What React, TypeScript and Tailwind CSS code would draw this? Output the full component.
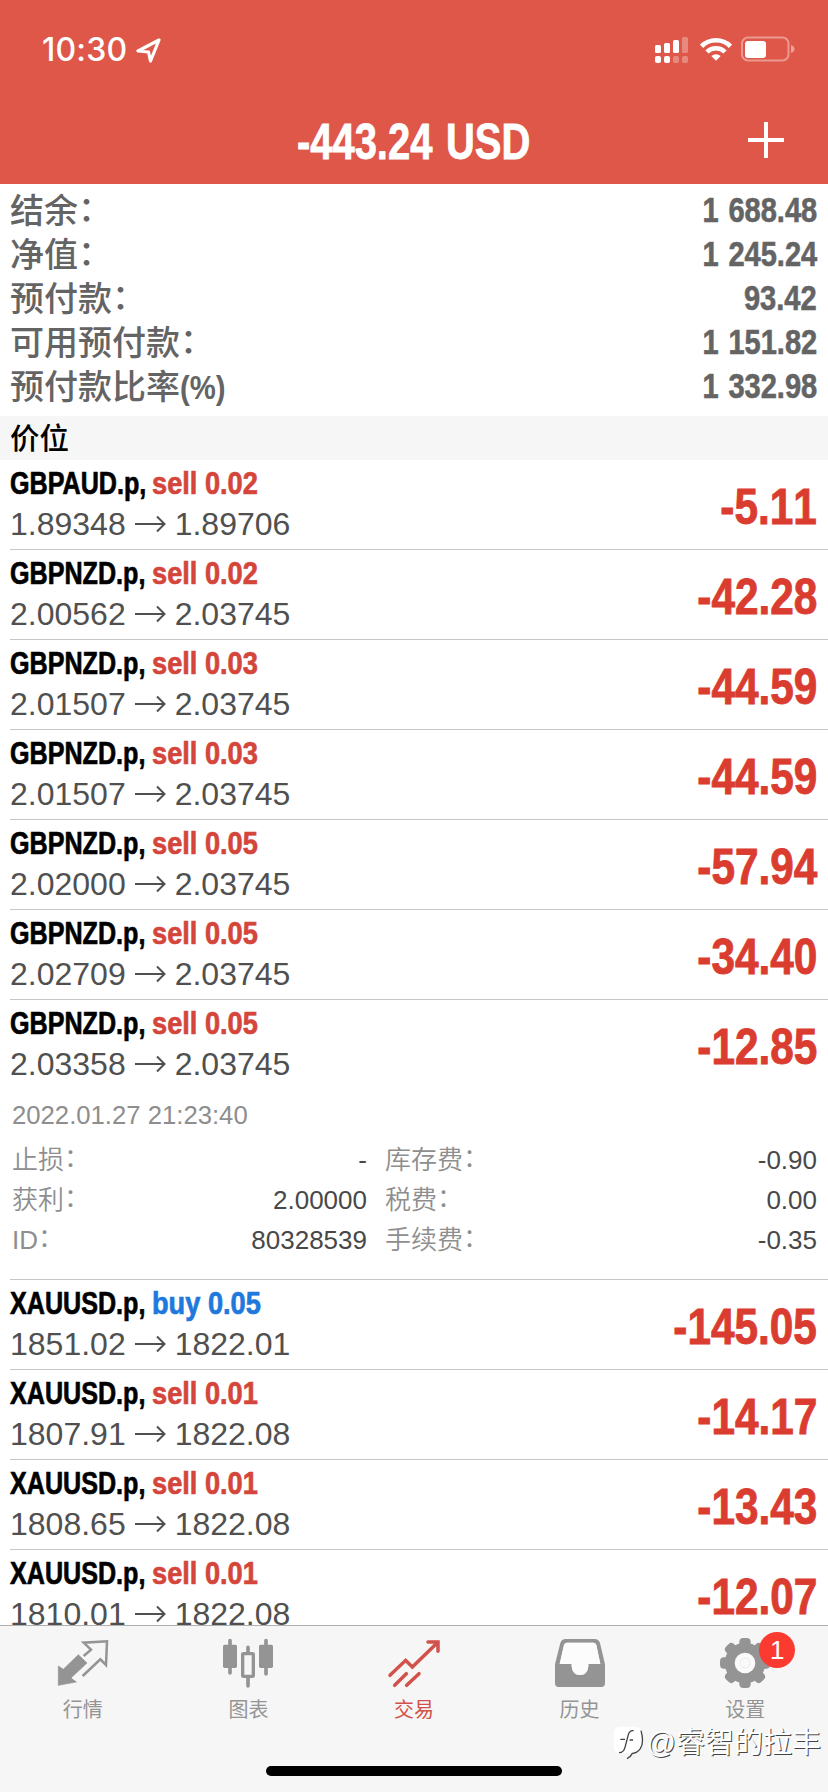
import { useState, type ReactNode } from "react";

type Side = "buy" | "sell";

interface Position {
  id: number;
  symbol: string;
  side: Side;
  volume: string;
  open: string;
  current: string;
  profit: string;
}

const summary = [
  { label: "结余", value: "1 688.48" },
  { label: "净值", value: "1 245.24" },
  { label: "预付款", value: "93.42" },
  { label: "可用预付款", value: "1 151.82" },
];

const positions: Position[] = [
  { id: 1, symbol: "GBPAUD.p", side: "sell", volume: "0.02", open: "1.89348", current: "1.89706", profit: "-5.11" },
  { id: 2, symbol: "GBPNZD.p", side: "sell", volume: "0.02", open: "2.00562", current: "2.03745", profit: "-42.28" },
  { id: 3, symbol: "GBPNZD.p", side: "sell", volume: "0.03", open: "2.01507", current: "2.03745", profit: "-44.59" },
  { id: 4, symbol: "GBPNZD.p", side: "sell", volume: "0.03", open: "2.01507", current: "2.03745", profit: "-44.59" },
  { id: 5, symbol: "GBPNZD.p", side: "sell", volume: "0.05", open: "2.02000", current: "2.03745", profit: "-57.94" },
  { id: 6, symbol: "GBPNZD.p", side: "sell", volume: "0.05", open: "2.02709", current: "2.03745", profit: "-34.40" },
  { id: 7, symbol: "GBPNZD.p", side: "sell", volume: "0.05", open: "2.03358", current: "2.03745", profit: "-12.85" },
  { id: 8, symbol: "XAUUSD.p", side: "buy", volume: "0.05", open: "1851.02", current: "1822.01", profit: "-145.05" },
  { id: 9, symbol: "XAUUSD.p", side: "sell", volume: "0.01", open: "1807.91", current: "1822.08", profit: "-14.17" },
  { id: 10, symbol: "XAUUSD.p", side: "sell", volume: "0.01", open: "1808.65", current: "1822.08", profit: "-13.43" },
  { id: 11, symbol: "XAUUSD.p", side: "sell", volume: "0.01", open: "1810.01", current: "1822.08", profit: "-12.07" },
];

const details = [
  { left: "止损", leftValue: "-", right: "库存费", rightValue: "-0.90" },
  { left: "获利", leftValue: "2.00000", right: "税费", rightValue: "0.00" },
  { left: "ID", leftValue: "80328539", right: "手续费", rightValue: "-0.35" },
];

function Colon() {
  return <span className="relative -top-[2px]">：</span>;
}

function StatusBar() {
  return (
    <div className="flex h-24 items-start justify-between pt-[33px] pr-[33px] pl-[42px]">
      <div className="flex items-center">
        <span className="w-[94px] font-['Inter'] text-[32px] leading-[34px] font-medium tracking-[0.2px]">10:30</span>
        <svg width="26" height="26" viewBox="0 0 26 26" fill="none" stroke="white" strokeWidth="3.200" strokeLinejoin="round">
          <path d="M23 3 L2 14 L12.500 15 L14.500 24 Z" />
        </svg>
      </div>
      <div className="flex items-start pt-[3px]">
        <svg width="34" height="28" viewBox="0 0 34 28" fill="white">
          <rect x="0" y="9" width="6" height="8" rx="1.500" />
          <rect x="9" y="7" width="6" height="10" rx="1.500" />
          <rect x="18" y="4" width="6" height="13" rx="1.500" />
          <rect x="27" y="1" width="6" height="16" rx="1.500" opacity="0.3" />
          <rect x="0" y="20" width="6" height="7" rx="2" />
          <rect x="9" y="20" width="6" height="7" rx="2" />
          <rect x="18" y="20" width="6" height="7" rx="2" opacity="0.3" />
          <rect x="27" y="20" width="6" height="7" rx="2" opacity="0.3" />
        </svg>
        <svg className="ml-[11px]" width="32" height="26" viewBox="0 0 32 26" fill="none" stroke="white" strokeWidth="4.600">
          <path d="M1.500 10.300 A20.500 20.500 0 0 1 30.500 10.300" />
          <path d="M7 16 A12.600 12.600 0 0 1 25 16" />
          <path d="M16 24.800 L11.300 20 A7 7 0 0 1 20.700 20 Z" fill="white" stroke="none" />
        </svg>
        <svg className="ml-[9px]" width="54" height="26" viewBox="0 0 54 26" fill="none">
          <rect x="1" y="1.500" width="46.500" height="23" rx="6" stroke="white" strokeOpacity="0.4" strokeWidth="2" />
          <rect x="4" y="5" width="21" height="17" rx="3" fill="white" />
          <path d="M50 9 q3.500 1.500 3.500 4 q0 2.500 -3.500 4 z" fill="white" fillOpacity="0.45" />
        </svg>
      </div>
    </div>
  );
}

function Header() {
  return (
    <header className="h-[184px] shrink-0 bg-[#de5749] text-white">
      <StatusBar />
      <div className="grid grid-cols-[1fr_auto_1fr] items-center pt-[16px]">
        <div />
        <h1 className="scale-x-[0.807] text-[49.5px] leading-[60px] font-bold [word-spacing:3px] [-webkit-text-stroke:0.8px]">-443.24 USD</h1>
        <button type="button" className="mr-[44px] justify-self-end">
          <svg className="-mt-[5px]" width="36" height="36" viewBox="0 0 36 36" stroke="white" strokeWidth="4">
            <path d="M18 0 V36 M0 18 H36" />
          </svg>
        </button>
      </div>
    </header>
  );
}

function Summary() {
  return (
    <section className="h-[232px] shrink-0 pt-[4px] pr-[11px] pl-[10px] text-[#646464]">
      {summary.map((row) => (
        <div key={row.label} className="flex h-11 justify-between leading-[44px]">
          <div className="pt-px text-[34px] font-medium">
            {row.label}
            <Colon />
          </div>
          <div className="origin-right scale-x-[0.83] text-[35px] font-bold [word-spacing:2px] [font-kerning:none] [-webkit-text-stroke:0.6px]">
            {row.value}
          </div>
        </div>
      ))}
      <div className="flex h-11 justify-between leading-[44px]">
        <div className="flex pt-px text-[34px] font-medium">
          预付款比率
          <span className="origin-left scale-x-[0.86] font-bold">(%)</span>
        </div>
        <div className="origin-right scale-x-[0.83] text-[35px] font-bold [word-spacing:2px] [font-kerning:none] [-webkit-text-stroke:0.6px]">
          1 332.98
        </div>
      </div>
    </section>
  );
}

function PositionDetails() {
  return (
    <div className="h-[190px] border-b border-[#c6c6c8] pr-[11px] text-[26px]">
      <div className="pt-[5px] pl-[2px] text-[25.7px] leading-10 text-[#8e8e8e]">2022.01.27 21:23:40</div>
      <div className="pt-[5px]">
        {details.map((row) => (
          <div key={row.left} className="flex leading-10">
            <div className="flex w-[357px] justify-between pl-[2px]">
              <span className="font-[350] text-[#8e8e8e]">
                {row.left}
                <Colon />
              </span>
              <span className="text-[#484848]">{row.leftValue}</span>
            </div>
            <div className="ml-[18px] flex flex-1 justify-between">
              <span className="font-[350] text-[#8e8e8e]">
                {row.right}
                <Colon />
              </span>
              <span className="text-[#484848]">{row.rightValue}</span>
            </div>
          </div>
        ))}
      </div>
    </div>
  );
}

function PositionRow({ position, expanded, onToggle }: { position: Position; expanded: boolean; onToggle: () => void }) {
  return (
    <li className="pl-[10px]">
      <div
        className={(expanded ? "" : "border-b border-[#c6c6c8] ") + "flex h-[90px] justify-between pt-[3px] pr-[11px]"}
        onClick={onToggle}
      >
        <div>
          <div className="flex text-[32px] leading-10 font-bold whitespace-nowrap [-webkit-text-stroke:0.7px]">
            <span className="w-[142px] origin-left scale-x-[0.785] text-black">{position.symbol},</span>
            <span className={(position.side === "buy" ? "text-[#1f78dc]" : "text-[#d4463b]") + " origin-left scale-x-[0.85]"}>
              {position.side} {position.volume}
            </span>
          </div>
          <div className="flex items-center pt-px text-[32px] leading-10 text-[#505050]">
            <span>{position.open}</span>
            <svg className="mr-[9px] ml-[9px]" width="31" height="18" viewBox="0 0 31 18" fill="none" stroke="currentColor" strokeWidth="2">
              <path d="M0 9 H29.500 M22 1.500 L29.500 9 L22 16.500" />
            </svg>
            <span>{position.current}</span>
          </div>
        </div>
        <div className="origin-right scale-x-[0.855] pt-[14px] text-[49.5px] leading-[60px] font-bold text-[#da3d30] [font-kerning:none] [-webkit-text-stroke:0.9px]">
          {position.profit}
        </div>
      </div>
      {expanded && <PositionDetails />}
    </li>
  );
}

function QuotesIcon() {
  return (
    <svg width="52" height="50" viewBox="168 236 156 150">
      <path d="M172 320 L187 330 L232 286 L258 311 L210 356 L226 368 L172 378 Z" fill="currentColor" stroke="currentColor" strokeWidth="2" strokeLinejoin="round" />
      <path d="M248 290 L270 271 L248 250 L318 246 L315 317 L298 300 L245 350" fill="none" stroke="currentColor" strokeWidth="7.500" />
    </svg>
  );
}

function ChartIcon() {
  return (
    <svg width="54" height="51" viewBox="663 234 162 153" fill="none" stroke="currentColor" strokeWidth="11" strokeLinecap="round">
      <path d="M690 242 V339 M744 262 V284 M744 350 V378 M798 242 V342" />
      <rect x="669" y="254" width="42" height="70" rx="5" fill="currentColor" stroke="none" />
      <rect x="777" y="254" width="42" height="70" rx="5" fill="currentColor" stroke="none" />
      <rect x="728" y="281" width="32" height="68" rx="2" strokeWidth="10" fill="#f6f6f6" />
    </svg>
  );
}

function TradeIcon() {
  return (
    <svg width="54" height="50" viewBox="49 36 162 150" fill="none" stroke="currentColor" strokeWidth="10.500" strokeLinecap="round">
      <path d="M58 148 L105 103 L125 123 L200 50" />
      <path d="M172 48 H202 V76" />
      <path d="M72 178 L107 143 M108 178 L145 143" />
    </svg>
  );
}

function HistoryIcon() {
  return (
    <svg width="50" height="48" viewBox="417 240 150 144" fill="currentColor" fillRule="evenodd">
      <path d="M449 240 H536 Q548 240 552 252 L567 316 V373 Q567 384 556 384 H428 Q417 384 417 373 V316 L433 252 Q437 240 449 240 Z M453 251 Q446 251 444 258 L431 315 H467 V322 Q469 348 492 348 Q515 348 517 322 V315 H553 L541 258 Q539 251 532 251 Z" />
      <path d="M453 251 H532 Q539 251 541 258 L553 315 H517 V322 Q515 348 492 348 Q469 348 467 322 V315 H431 L444 258 Q446 251 453 251 Z" fill="#fcfcfc" />
    </svg>
  );
}

function SettingsIcon() {
  return (
    <svg width="50" height="50" viewBox="-75 -75 150 150" fill="currentColor">
      <circle r="61" />
      {[0, 45, 90, 135].map((angle) => (
        <rect key={angle} x="-17" y="-75" width="34" height="150" rx="12" transform={`rotate(${angle})`} />
      ))}
      <circle r="31" fill="#fafafa" />
      <circle r="15" fill="none" stroke="#efefef" strokeWidth="4" />
    </svg>
  );
}

function Tab({ label, active, badge, children }: { label: string; active?: boolean; badge?: number; children: ReactNode }) {
  return (
    <button type="button" className={(active ? "text-[#d1524a]" : "text-[#949494]") + " flex flex-1 flex-col items-center pt-[10px]"}>
      <span className="relative flex h-[54px] items-center">
        {children}
        {badge && (
          <span className="absolute -top-[4px] left-[39px] h-9 w-9 rounded-full bg-[#fc3b30] text-center text-[26px] leading-9 text-white">
            {badge}
          </span>
        )}
      </span>
      <span className="pt-[6px] text-[20px] leading-7">{label}</span>
    </button>
  );
}

function Watermark() {
  return (
    <div className="pointer-events-none absolute right-[7px] bottom-[29px] flex items-center">
      <svg className="mr-[2px]" width="32" height="34" viewBox="0 0 96 102" fill="none">
        <rect x="2" y="2" width="84" height="80" rx="18" fill="white" />
        <path d="M62 14 Q50 12 46 26 L36 64 Q32 80 18 80 M22 40 H36 M50 42 H60 M84 14 Q94 50 82 68 Q72 82 58 82 Q52 94 42 98" stroke="#444" strokeWidth="4" />
      </svg>
      <span className="text-[29px] leading-10 text-white [text-shadow:1px_1px_0.5px_#444]">@睿智的拉丰</span>
    </div>
  );
}

export default function App() {
  const [openId, setOpenId] = useState(7);

  return (
    <main className="relative flex h-[1792px] w-[828px] flex-col overflow-hidden bg-white font-['Liberation_Sans','Noto_Sans_CJK_SC',sans-serif]">
      <Header />
      <Summary />
      <div className="h-11 shrink-0 bg-[#f6f6f6] pt-px pl-[10px] text-[29.5px] leading-[44px] font-medium text-black">价位</div>
      <ul className="min-h-0 flex-1 overflow-hidden">
        {positions.map((p) => (
          <PositionRow key={p.id} position={p} expanded={openId === p.id} onToggle={() => setOpenId(openId === p.id ? -1 : p.id)} />
        ))}
      </ul>
      <nav className="h-[167px] shrink-0 border-t border-[#b0b0b0] bg-[#f6f6f6]">
        <div className="flex h-[140px]">
          <Tab label="行情">
            <QuotesIcon />
          </Tab>
          <Tab label="图表">
            <ChartIcon />
          </Tab>
          <Tab label="交易" active>
            <TradeIcon />
          </Tab>
          <Tab label="历史">
            <HistoryIcon />
          </Tab>
          <Tab label="设置" badge={1}>
            <SettingsIcon />
          </Tab>
        </div>
        <div className="mx-auto h-[10px] w-[296px] rounded-full bg-black" />
      </nav>
      <Watermark />
    </main>
  );
}
